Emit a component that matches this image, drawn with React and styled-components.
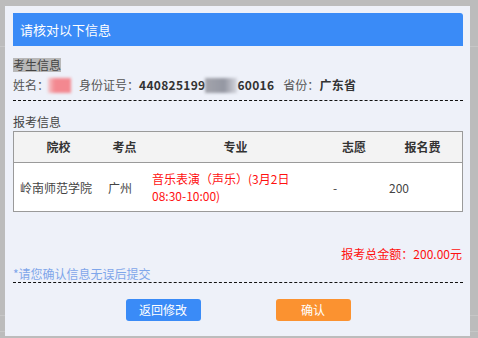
import React from "react";
import styled, { createGlobalStyle } from "styled-components";

const Global = createGlobalStyle`
  html, body { margin: 0; padding: 0; }
  body {
    background:
      linear-gradient(#c7c7c7, #c7c7c7) 0 46px / 100% 1px no-repeat,
      linear-gradient(#c7c7c7, #c7c7c7) 0 315px / 100% 1px no-repeat,
      linear-gradient(#c7c7c7, #c7c7c7) 0 331px / 100% 1px no-repeat,
      #bcbcbc;
    font-family: "Noto Sans CJK SC", "Noto Sans", sans-serif;
    font-size: 12px;
    color: #444;
    height: 338px;
    overflow: hidden;
  }
`;

const Page = styled.div`
  padding: 6px 0 0 5px;
`;

const Dialog = styled.div`
  width: 465px;
  height: 330px;
  box-sizing: border-box;
  background: #eef1f9;
  padding: 7px 7px 0 8px;
  display: flex;
  flex-direction: column;
`;

const Header = styled.div`
  height: 33px;
  background: #3a8bf7;
  border-top-right-radius: 3px;
  color: #fff;
  font-size: 13px;
  line-height: 33px;
  padding-left: 7px;
`;

const SectionLabel = styled.div`
  margin-top: ${(p) => p.$mt}px;
  line-height: 14px;
  height: 14px;
  font-size: 12px;
  color: #444;
`;

const Selected = styled.span`
  display: inline-block;
  background: #b8b8b8;
  line-height: 14px;
  height: 14px;
`;

const InfoRow = styled.div`
  margin-top: 5px;
  height: 16px;
  line-height: 16px;
  display: flex;
  align-items: center;
  white-space: nowrap;
  color: #555;
`;

const Label = styled.span`
  margin-left: ${(p) => p.$ml || 0}px;
`;

const Value = styled.span`
  font-weight: bold;
  color: #333;
  letter-spacing: 0.3px;
`;

const Blur = styled.span`
  display: inline-block;
  width: ${(p) => p.$w}px;
  height: 15px;
  background: ${(p) => p.$bg};
  filter: blur(1.5px);
  margin-left: ${(p) => p.$ml || 0}px;
`;

const Dashed = styled.div`
  margin-top: ${(p) => p.$mt}px;
  border-top: 1px dashed #111;
`;

const Table = styled.div`
  margin-top: 2px;
  border: 1px solid #9a9a9a;
  display: grid;
  grid-template-columns: 89px 43px 179px 58px 79px;
  background: #fff;
`;

const HeadCell = styled.div`
  height: 30px;
  line-height: 30px;
  background: #f3f3f3;
  border-bottom: 1px solid #9a9a9a;
  text-align: center;
  font-weight: bold;
  color: #333;
  font-size: 12px;
`;

const Cell = styled.div`
  height: 48px;
  display: flex;
  align-items: center;
  padding: 0 6px 0 ${(p) => p.$pl ?? 6}px;
  color: ${(p) => (p.$red ? "#ff1010" : "#444")};
  line-height: 17px;
`;

const Total = styled.div`
  margin-top: 35px;
  line-height: 14px;
  text-align: right;
  color: #ff1010;
  padding-right: 1px;
`;

const Note = styled.div`
  margin-top: 6px;
  line-height: 14px;
  color: #7fa6ea;
`;

const Buttons = styled.div`
  margin-top: 16px;
  display: flex;
  justify-content: center;
  gap: 75px;
`;

const Button = styled.button`
  width: 75px;
  height: 22px;
  border: none;
  border-radius: 3px;
  background: ${(p) => (p.$orange ? "#fb9230" : "#3a8bf7")};
  color: #fff;
  font-family: "Noto Sans CJK SC", sans-serif;
  font-size: 12px;
  padding: 0;
  line-height: 22px;
`;

export default function App() {
  return (
    <Page>
      <Global />
      <Dialog>
        <Header>请核对以下信息</Header>
        <SectionLabel $mt={12}>
          <Selected>考生信息</Selected>
        </SectionLabel>
        <InfoRow>
          <Label>姓名：</Label>
          <Blur $w={23} $ml={-1} $bg="linear-gradient(90deg,#f4c8cc 0%,#f38890 30%,#f38890 100%)" />
          <Label $ml={8}>身份证号：</Label>
          <Value>440825199</Value>
          <Blur $w={32} $bg="linear-gradient(90deg,#a3a4ac 0%,#9497a2 60%,#d4d6de 100%)" />
          <Value>60016</Value>
          <Label $ml={9}>省份：</Label>
          <Value>广东省</Value>
        </InfoRow>
        <Dashed $mt={7} />
        <SectionLabel $mt={14}>报考信息</SectionLabel>
        <Table>
          <HeadCell>院校</HeadCell>
          <HeadCell>考点</HeadCell>
          <HeadCell>专业</HeadCell>
          <HeadCell>志愿</HeadCell>
          <HeadCell>报名费</HeadCell>
          <Cell>岭南师范学院</Cell>
          <Cell $pl={5}>广州</Cell>
          <Cell $red>音乐表演（声乐）(3月2日 08:30-10:00)</Cell>
          <Cell $pl={8}>-</Cell>
          <Cell>200</Cell>
        </Table>
        <Total>报考总金额：200.00元</Total>
        <Note>*请您确认信息无误后提交</Note>
        <Dashed $mt={1} />
        <Buttons>
          <Button>返回修改</Button>
          <Button $orange>确认</Button>
        </Buttons>
      </Dialog>
    </Page>
  );
}
